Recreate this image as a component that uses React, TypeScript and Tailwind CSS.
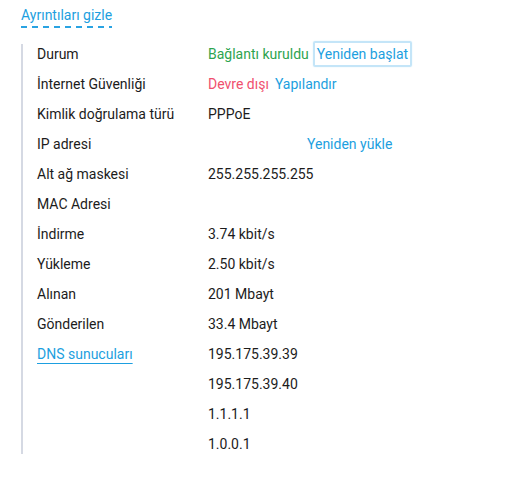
function Row({ label, children }: { label: React.ReactNode; children?: React.ReactNode }) {
  return (
    <div className="flex h-5 items-center">
      <div className="w-[171px] shrink-0">{label}</div>
      <div className="flex items-center">{children}</div>
    </div>
  );
}

export default function App() {
  return (
    <div className="min-h-[491px] w-[520px] bg-white pl-[21px] pt-[5px] font-['Roboto',sans-serif] text-[14px] leading-5 text-[#1c1c1c]">
      <button className="bg-[repeating-linear-gradient(to_right,#2aa3e2_0_6px,transparent_6px_11px)] bg-[length:100%_2px] bg-bottom bg-no-repeat pb-[3px] text-[#1d9fe0]">
        Ayrıntıları gizle
      </button>
      <div className="mt-[16px] flex flex-col gap-[10px] border-l-2 border-[#d5d9e3] pl-[14px]">
        <Row label="Durum">
          <span className="text-[#2ea44f]">Bağlantı kuruldu</span>
          <button className="-my-[3px] ml-[4px] rounded-[2px] border-2 border-[#c4e5f8] px-[2px] py-[1px] text-[#1d9fe0] shadow-[0_0_2px_#dff1fb]">
            Yeniden başlat
          </button>
        </Row>
        <Row label="İnternet Güvenliği">
          <span className="text-[#f0506e]">Devre dışı</span>
          <button className="ml-[6px] text-[#1d9fe0]">Yapılandır</button>
        </Row>
        <Row label="Kimlik doğrulama türü">PPPoE</Row>
        <Row label="IP adresi">
          <button className="ml-[99px] text-[#1d9fe0]">Yeniden yükle</button>
        </Row>
        <Row label="Alt ağ maskesi">255.255.255.255</Row>
        <Row label="MAC Adresi" />
        <Row label="İndirme">3.74 kbit/s</Row>
        <Row label="Yükleme">2.50 kbit/s</Row>
        <Row label="Alınan">201 Mbayt</Row>
        <Row label="Gönderilen">33.4 Mbayt</Row>
        <Row
          label={
            <button className="text-[#1d9fe0] underline decoration-1 underline-offset-[4px]">
              DNS sunucuları
            </button>
          }
        >
          195.175.39.39
        </Row>
        <Row label="">195.175.39.40</Row>
        <Row label="">1.1.1.1</Row>
        <Row label="">1.0.0.1</Row>
      </div>
    </div>
  );
}
